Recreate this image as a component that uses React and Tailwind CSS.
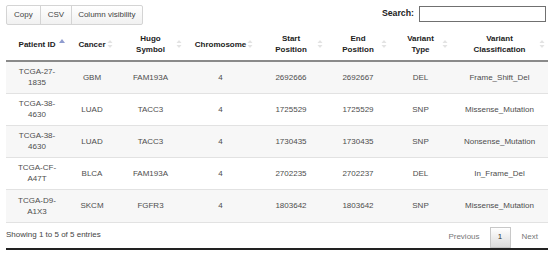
const columns = [
  { label: ["Patient ID"], w: "w-[62px]", sort: "asc" },
  { label: ["Cancer"], w: "w-[48px]" },
  { label: ["Hugo", "Symbol"], w: "w-[69px]" },
  { label: ["Chromosome"], w: "w-[71px]" },
  { label: ["Start", "Position"], w: "w-[70px]" },
  { label: ["End", "Position"], w: "w-[64px]" },
  { label: ["Variant", "Type"], w: "w-[61px]" },
  { label: ["Variant", "Classification"], w: "w-[97px]" },
];

const rows = [
  [["TCGA-27-", "1835"], "GBM", "FAM193A", "4", "2692666", "2692667", "DEL", "Frame_Shift_Del"],
  [["TCGA-38-", "4630"], "LUAD", "TACC3", "4", "1725529", "1725529", "SNP", "Missense_Mutation"],
  [["TCGA-38-", "4630"], "LUAD", "TACC3", "4", "1730435", "1730435", "SNP", "Nonsense_Mutation"],
  [["TCGA-CF-", "A47T"], "BLCA", "FAM193A", "4", "2702235", "2702237", "DEL", "In_Frame_Del"],
  [["TCGA-D9-", "A1X3"], "SKCM", "FGFR3", "4", "1803642", "1803642", "SNP", "Missense_Mutation"],
];

const SortIcon = ({ dir }) => (
  <svg
    className="absolute right-[3px] top-1/2 -translate-y-1/2"
    width="6"
    height="10"
    viewBox="0 0 6 10"
  >
    {dir === "asc" ? (
      <path d="M0 4 L3 0 L6 4 Z" fill="#8f9ccf" />
    ) : (
      <>
        <path d="M0.5 4 L3 1 L5.5 4 Z" fill="#e3e3e3" />
        <path d="M0.5 6 L3 9 L5.5 6 Z" fill="#e3e3e3" />
      </>
    )}
  </svg>
);

const Cell = ({ value }) =>
  Array.isArray(value) ? (
    <>
      {value[0]}
      <br />
      {value[1]}
    </>
  ) : (
    value
  );

export default function App() {
  return (
    <div className="w-[554px] h-[255px] bg-white px-[6px] pt-[5px] font-['Liberation_Sans',Arial,sans-serif] text-[8px] text-[#333]">
      <div className="flex items-start justify-between">
        <div className="flex h-[20px] rounded-[2px] border border-[#d4d4d4] bg-gradient-to-b from-white to-[#f1f1f1]">
          <button className="px-[7px] leading-[18px] text-[#444]">Copy</button>
          <button className="border-l border-[#d4d4d4] px-[7px] leading-[18px] text-[#444]">CSV</button>
          <button className="border-l border-[#d4d4d4] px-[6px] leading-[18px] text-[#444]">
            Column visibility
          </button>
        </div>
        <label className="mr-[2px] mt-[1px] flex items-center gap-[5px] text-[8.75px] font-bold text-[#222]">
          Search:
          <input className="h-[16px] w-[127px] border border-[#707070] bg-white outline-none" />
        </label>
      </div>

      <table className="mt-[3px] w-[542px] table-fixed border-collapse">
        <thead>
          <tr className="border-b-2 border-[#8a8a8a]">
            {columns.map((c, i) => (
              <th
                key={i}
                className={`${c.w} relative h-[33px] p-0 px-[8px] text-center align-middle font-bold leading-[11px] text-[#222]`}
              >
                {c.label.length > 1 ? (
                  <>
                    {c.label[0]}
                    <br />
                    {c.label[1]}
                  </>
                ) : (
                  c.label[0]
                )}
                <SortIcon dir={c.sort} />
              </th>
            ))}
          </tr>
        </thead>
        <tbody className="text-[#4d4d4d]">
          {rows.map((r, i) => {
            const last = i === rows.length - 1;
            return (
              <tr
                key={i}
                className={`${i % 2 === 0 ? "bg-[#f7f7f7]" : "bg-white"} ${i > 0 ? "border-t border-[#e2e2e2]" : ""} ${last ? "border-b border-[#8a8a8a]" : ""}`}
              >
                {r.map((v, j) => (
                  <td
                    key={j}
                    className={`${last ? "h-[33px]" : "h-[32px]"} p-0 px-[4px] text-center align-middle leading-[11px]`}
                  >
                    <Cell value={v} />
                  </td>
                ))}
              </tr>
            );
          })}
        </tbody>
      </table>

      <div className="mt-[4px] flex items-end justify-between border-b-2 border-[#222]">
        <div className="mb-[7px] text-[#444]">Showing 1 to 5 of 5 entries</div>
        <div className="flex items-center">
          <span className="px-[9px] text-[#777]">Previous</span>
          <span className="ml-[1px] flex h-[21px] w-[21px] items-center justify-center border border-[#c8c8c8] bg-gradient-to-b from-white to-[#dcdcdc] text-[#333]">
            1
          </span>
          <span className="pl-[11px] pr-[10px] text-[#777]">Next</span>
        </div>
      </div>
    </div>
  );
}
